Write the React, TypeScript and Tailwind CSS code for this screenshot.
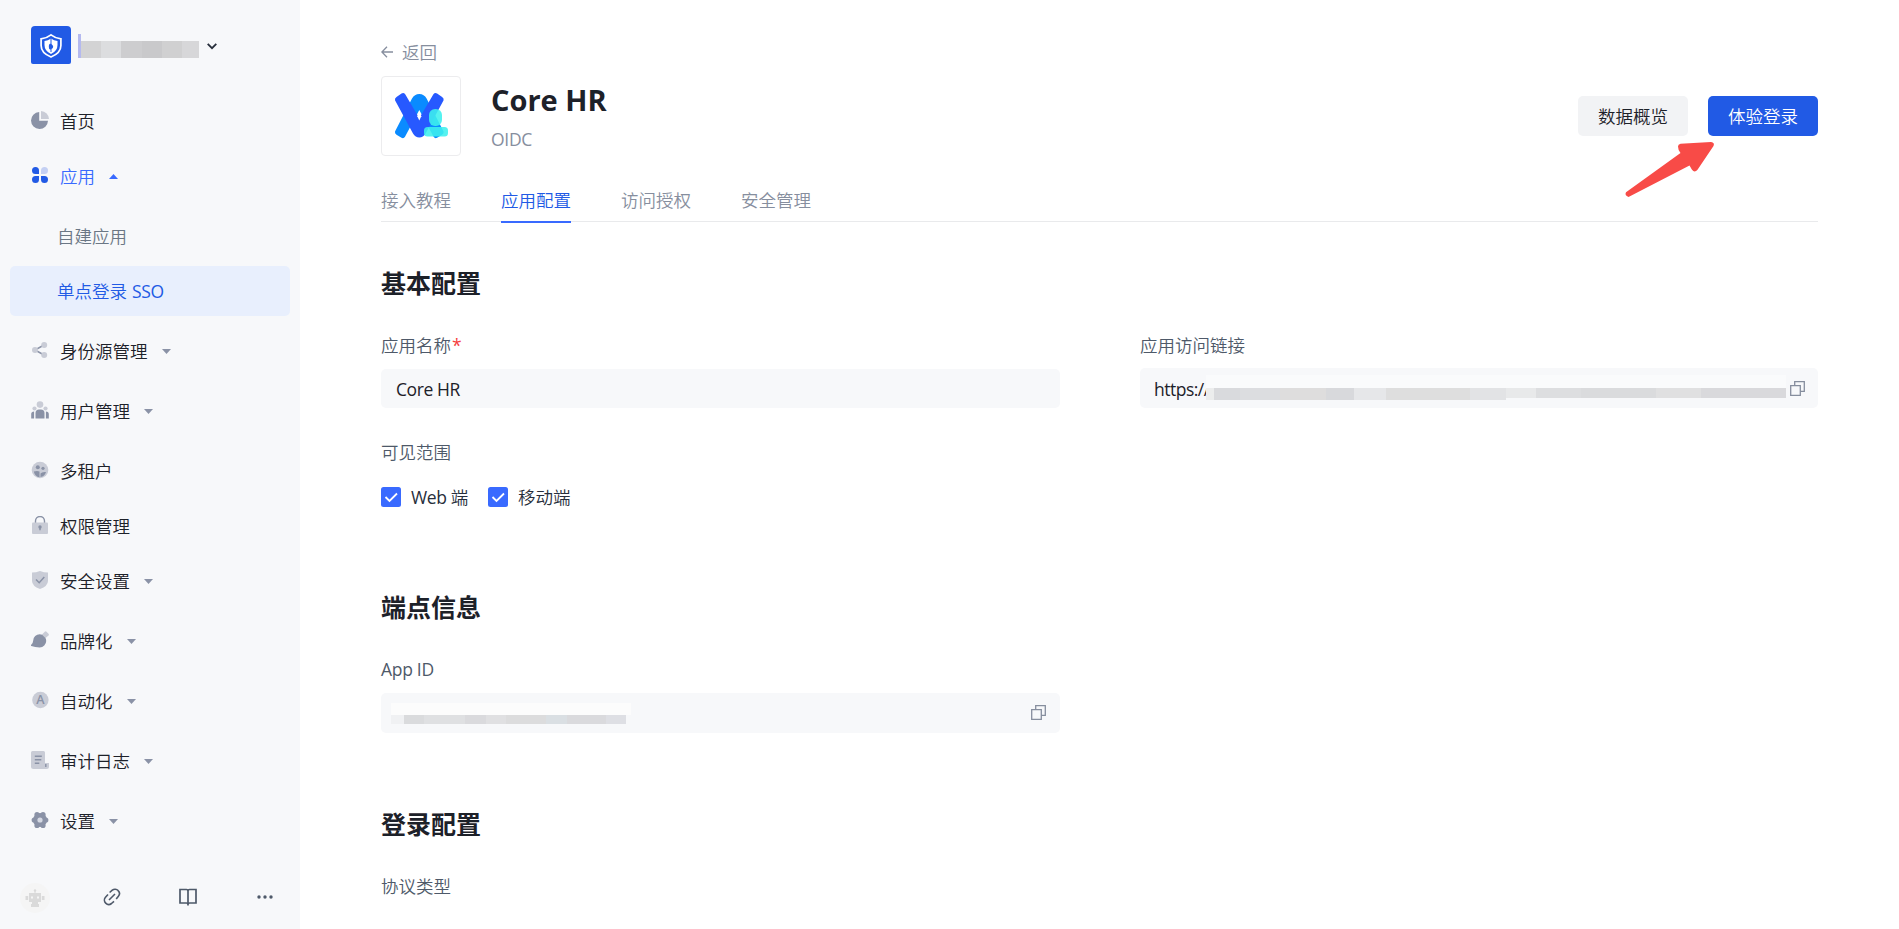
import type { ReactNode } from 'react';

const G = '#8a92a6';
const L = '#c9ccd6';

const Svg = ({ children }: { children: ReactNode }) => (
  <svg width="18" height="18" viewBox="0 0 18 18" fill="none" className="shrink-0">
    {children}
  </svg>
);

const icons = {
  home: (
    <Svg>
      <path d="M8.200 1v8.800H17A8.500 8.500 0 1 1 8.200 1Z" fill={G} />
      <path d="M10 0a8.200 8.200 0 0 1 8 8h-8Z" fill={L} />
    </Svg>
  ),
  apps: (
    <Svg>
      <path d="M4.500 1A3.500 3.500 0 0 1 8 4.500V8H4.500a3.500 3.500 0 0 1 0-7ZM4.500 10H8v3.500A3.500 3.500 0 1 1 4.500 10ZM10 10h3.500A3.500 3.500 0 1 1 10 13.500Z" fill="#215ae5" />
      <path d="M13.500 1a3.500 3.500 0 0 1 0 7H10V4.500A3.500 3.500 0 0 1 13.500 1Z" fill="#c4d0f3" />
    </Svg>
  ),
  share: (
    <Svg>
      <path d="M13 4 4 9l9 5" stroke={G} strokeWidth="1.500" />
      <circle cx="13.200" cy="4" r="3" fill={L} />
      <circle cx="4" cy="9" r="3" fill={L} />
      <circle cx="13.200" cy="14" r="3" fill={L} />
    </Svg>
  ),
  users: (
    <Svg>
      <circle cx="9" cy="3.600" r="3.300" fill={L} />
      <circle cx="3.500" cy="7.500" r="2.100" fill={L} />
      <circle cx="14.500" cy="7.500" r="2.100" fill={L} />
      <path d="M4.500 17.500V12A3.500 3.500 0 0 1 8 8.500h2a3.500 3.500 0 0 1 3.500 3.500v5.500ZM.2 17.500V13q0-2.500 2.900-2.600v7.100ZM17.800 17.500V13q0-2.500-2.900-2.600v7.100Z" fill={G} />
    </Svg>
  ),
  tenants: (
    <Svg>
      <circle cx="9" cy="9" r="8.300" fill={L} />
      <circle cx="6.800" cy="6.300" r="2" fill={G} />
      <circle cx="12" cy="7.300" r="1.600" fill={G} />
      <path d="M2.800 10.500q3.500-1 5.700 0v5.700q-4.500-.5-5.700-5.700ZM9.500 16v-3.500q1.500-2 5.500-1.500-1.300 4.300-5.500 5Z" fill={G} />
    </Svg>
  ),
  lock: (
    <Svg>
      <path d="M4.500 7V5a4.500 4.500 0 0 1 9 0v2" stroke={G} strokeWidth="1.400" />
      <rect x="1" y="6.500" width="16" height="11.500" rx="1" fill={L} />
      <circle cx="9" cy="11" r="1.700" fill={G} />
      <path d="M9 11v3.300" stroke={G} strokeWidth="1.500" />
    </Svg>
  ),
  shield: (
    <Svg>
      <path d="M1 1.500Q5 1.500 9 0q4 1.500 8 1.500V10q0 5-8 8-8-3-8-8Z" fill={L} />
      <path d="m5 8.500 3.200 3.200L13.300 6" stroke={G} strokeWidth="1.500" />
    </Svg>
  ),
  brand: (
    <Svg>
      <path d="m10.500 4 3.300-3.300q.8-.8 1.700 0L17.500 2.700q.8.900 0 1.700L14 7.500Z" fill={L} />
      <path d="M0 14Q2 12.700 2.200 9.500A6.500 6.500 0 0 1 8.700 3.200q1.300 0 2.400.5l3.300 3.300q.8 1.200.8 2.900a6.500 6.500 0 0 1-6.500 6.500Q4 16.300.3 15-.3 14.500 0 14Z" fill={G} />
    </Svg>
  ),
  auto: (
    <Svg>
      <circle cx="9.400" cy="9" r="8.200" fill={L} />
      <text x="9.400" y="13.300" textAnchor="middle" fill={G} className="text-[12.5px] font-semibold">A</text>
    </Svg>
  ),
  audit: (
    <Svg>
      <path d="M1.500 0h11Q14 0 14 1.500V12h4v3.500q0 2.500-2.500 2.500h-13Q0 18 0 15.500v-14Q0 0 1.500 0Z" fill={L} />
      <path d="M3.800 5.300h7M3.800 8.800h6.500M3.800 12.200h4.500M14.800 13v3" stroke={G} strokeWidth="1.400" />
    </Svg>
  ),
  settings: (
    <Svg>
      <g fill={G}>
        <circle cx="9" cy="9" r="7" />
        <circle cx="3.200" cy="9" r="2.600" />
        <circle cx="14.800" cy="9" r="2.600" />
        <circle cx="6" cy="3.500" r="2.600" />
        <circle cx="12" cy="3.500" r="2.600" />
        <circle cx="6" cy="14.500" r="2.600" />
        <circle cx="12" cy="14.500" r="2.600" />
      </g>
      <circle cx="9" cy="9" r="2.600" fill="#d5d9e3" />
    </Svg>
  ),
};

const Caret = ({ up = false }: { up?: boolean }) => (
  <svg width="9" height="5" viewBox="0 0 9 5" className="ml-3.5 shrink-0">
    {up ? <path d="M0 5 4.500 0 9 5Z" fill="#396aff" /> : <path d="M0 0h9L4.500 5Z" fill="#8a92a6" />}
  </svg>
);

type NavProps = { icon: ReactNode; label: string; caret?: boolean };
const NavItem = ({ icon, label, caret }: NavProps) => (
  <div className={caret ? 'mb-2.5 flex h-[50px] items-center pl-[31px]' : 'mb-[5px] flex h-[50px] items-center pl-[31px]'}>
    <span className="-mt-0.5">{icon}</span>
    <span className="ml-[11px]">{label}</span>
    {caret && <Caret />}
  </div>
);

const CopyIcon = () => (
  <svg width="15" height="15" viewBox="0 0 15 15" fill="none" stroke="#868e9e" strokeWidth="1.300" className="shrink-0">
    <path d="M.7 4.700h9.600v9.600H.7ZM4.700 4.700v-4h9.600v9.600h-4" />
  </svg>
);

const Checkbox = () => (
  <svg width="20" height="20" viewBox="0 0 20 20" fill="none">
    <rect width="20" height="20" rx="2.500" fill="#396aff" />
    <path d="m4.500 10 4 4 7.500-7.500" stroke="#fff" strokeWidth="1.800" />
  </svg>
);

const Heading = ({ children }: { children: ReactNode }) => (
  <h2 className="text-[25px] leading-[36px] font-bold text-[#1d2129]">{children}</h2>
);

const Label = ({ children }: { children: ReactNode }) => (
  <div className="leading-[26px] text-[#4e5969]">{children}</div>
);

export default function App() {
  return (
    <div className="flex h-[929px] w-full overflow-hidden bg-white font-['Open_Sans','Noto_Sans_CJK_SC',sans-serif] text-[17.5px] leading-[26px] font-[350] text-[#1d2129]">
      <aside className="flex w-[300px] shrink-0 flex-col bg-[#f7f8fa]">
        <div className="flex h-24 items-start pt-[26px] pl-[31px]">
          <svg width="40" height="38" viewBox="0 0 40 38" fill="none">
            <path d="M4 0h32q4 0 4 4v32q0 2-2 2H2q-2 0-2-2V4q0-4 4-4Z" fill="#215ae5" />
            <path d="M20 8.800q4 3.200 9.900 4v6.700q0 7.500-9.900 11.500-9.900-4-9.900-11.500v-6.700q5.900-.8 9.900-4Z" stroke="#fff" strokeWidth="1.700" />
            <path d="M20 12.500q3 2 6.500 2.600V19q0 6-6.500 9-6.500-3-6.500-9v-3.900q3.500-.6 6.500-2.600Z" fill="#fff" />
            <path d="M20 17.500q2.200 1.700 2.200 3.300T20 23.300t-2.200-2.500 2.200-3.300ZM19.500 12h1v6h-1zM19.500 22h1v4h-1z" fill="#215ae5" />
          </svg>
          <div className="mt-2 ml-[7px] flex h-6 items-end">
            <span className="h-6 w-[3px] bg-[#b4b9ef]" />
            <span className="h-[17px] w-5 bg-[#d3d3d4]" />
            <span className="h-[17px] w-5 bg-[#dcdddf]" />
            <span className="h-[17px] w-[21px] bg-[#cdcdcf]" />
            <span className="h-[17px] w-5 bg-[#c9c9cb]" />
            <span className="h-[17px] w-5 bg-[#d0d0d1]" />
            <span className="h-[17px] w-[17px] bg-[#d7d7d9]" />
          </div>
          <svg width="10" height="7" viewBox="0 0 10 7" fill="none" className="mt-[17px] ml-2">
            <path d="m.7.900 4.300 4.300L9.300.9" stroke="#272e3b" strokeWidth="1.800" />
          </svg>
        </div>

        <nav className="flex-1">
          <NavItem icon={icons.home} label="首页" />
          <div className="mb-2.5 flex h-[50px] items-center pl-[31px] text-[#396aff]">
            <span className="-mt-0.5">{icons.apps}</span>
            <span className="ml-[11px]">应用</span>
            <Caret up />
          </div>
          <div className="mx-2.5 mb-[5px] flex h-[50px] items-center pl-[47px] text-[#6b7785]">自建应用</div>
          <div className="mx-2.5 mb-2.5 flex h-[50px] items-center rounded-[5px] bg-[#e8effd] pl-[47px] text-[#215ae5]">
            <span>单点登录</span>
            <span className="ml-[5px] font-normal tracking-[-0.3px]">SSO</span>
          </div>
          <NavItem icon={icons.share} label="身份源管理" caret />
          <NavItem icon={icons.users} label="用户管理" caret />
          <NavItem icon={icons.tenants} label="多租户" />
          <NavItem icon={icons.lock} label="权限管理" />
          <NavItem icon={icons.shield} label="安全设置" caret />
          <NavItem icon={icons.brand} label="品牌化" caret />
          <NavItem icon={icons.auto} label="自动化" caret />
          <NavItem icon={icons.audit} label="审计日志" caret />
          <NavItem icon={icons.settings} label="设置" caret />
        </nav>

        <div className="mb-4 flex h-[31px] items-center pl-5">
          <svg width="30" height="30" viewBox="0 0 30 30" fill="none">
            <circle cx="15" cy="15" r="15" fill="#f5f5f5" />
            <g fill="#dadada">
              <circle cx="15" cy="7.500" r="1.200" />
              <path d="M14.500 8h1v3h-1zM9 10h12v9H9zM5.500 13h2.700v4H5.500zM21.800 13h2.700v4h-2.700zM12 18h6v3h-6zM11 21h8v3h-8z" />
            </g>
            <path d="M11 13.500h2v2h-2zM17 13.500h2v2h-2z" fill="#f5f5f5" />
          </svg>
          <svg width="18" height="18" viewBox="0 0 18 18" fill="none" stroke="#4e5969" strokeWidth="1.600" className="-mt-0.5 ml-[53px]">
            <path d="M6.600 4.500 9.300 2.200a4.100 4.100 0 0 1 5.800.4 4.100 4.100 0 0 1 .3 5.600L13.200 11M5 6.500 2.500 9.200a4.300 4.300 0 0 0 .2 5.900 4.300 4.300 0 0 0 5.800.4L11 13.300M6 12l6-6" />
          </svg>
          <svg width="18" height="18" viewBox="0 0 18 18" fill="none" stroke="#4e5969" strokeWidth="1.700" className="-mt-0.5 ml-[58px]">
            <path d="M1 1.500h6.500Q9 1.500 9 3q0-1.500 1.500-1.500H17V15h-6.500Q9 15 9 16.500 9 15 7.500 15H1ZM9 3v14.500" />
          </svg>
          <svg width="16" height="4" viewBox="0 0 16 4" fill="#4e5969" className="-mt-0.5 ml-[60px]">
            <circle cx="2" cy="2" r="1.700" />
            <circle cx="8" cy="2" r="1.700" />
            <circle cx="14" cy="2" r="1.700" />
          </svg>
        </div>
      </aside>

      <main className="relative min-w-0 flex-1 pt-[39px] pr-[81px] pl-[81px]">
        <div className="flex h-[26px] items-center text-[#868e9e]">
          <svg width="12" height="12" viewBox="0 0 12 12" fill="none" stroke="#868e9e" strokeWidth="1.300">
            <path d="M12 6H1M6 .8.900 6 6 11.200" />
          </svg>
          <span className="ml-[9px]">返回</span>
        </div>

        <div className="mt-[11px] flex h-20">
          <div className="flex h-20 w-20 items-center justify-center rounded-[4px] border border-[#ececee]">
            <svg width="54" height="48" viewBox="0 0 54 48" fill="none">
              <path d="M1 39.500 18 6.500Q20.500 2 25.300 2t7.300 4.500l17 33q.5 2-1.500 3.300l-5 3q-2.200 1-3.500-1L25.300 18 11 44.800q-1.300 2-3.500 1l-5-3Q.5 41.500 1 39.500Z" fill="#0a8bff" />
              <path d="M1 8.200q-.5-2 1.500-3.300l5-3.500q2.200-1.200 3.700.8l14.100 24 14.100-24q1.500-2 3.700-.8l5 3.500q2 1.300 1.500 3.300l-18 33.300Q29.200 45.500 25.300 45.500T19 41.500Z" fill="#2759ff" />
              <path d="m25.300 20 2 4.200-2 4.300-2-4.300Z" fill="#fff" />
              <rect x="35" y="17" width="13" height="17" rx="6" fill="#3df0ee" fillOpacity=".88" />
              <rect x="30" y="35" width="24" height="9.500" rx="3.500" fill="#3df0ee" fillOpacity=".88" />
            </svg>
          </div>
          <div className="ml-[30px] flex-1">
            <h1 className="mt-0.5 text-[29px] leading-[44px] font-bold">Core HR</h1>
            <div className="mt-1 font-normal tracking-[-0.3px] text-[#868e9e]">OIDC</div>
          </div>
          <div className="mt-5 flex gap-5">
            <button className="h-10 w-[110px] rounded-[5px] bg-[#f2f3f5]">数据概览</button>
            <button className="h-10 w-[110px] rounded-[5px] bg-[#215ae5] text-white">体验登录</button>
          </div>
        </div>

        <div className="mt-[31px] flex h-[35px] gap-[50px] border-b border-[#e9eaec] text-[#868e9e]">
          <span>接入教程</span>
          <span className="h-9 border-b-2 border-[#396aff] text-[#215ae5]">应用配置</span>
          <span>访问授权</span>
          <span>安全管理</span>
        </div>

        <section className="mt-[43px]">
          <Heading>基本配置</Heading>
          <div className="mt-[31px] grid grid-cols-[679px_678px] gap-20">
            <div>
              <Label>应用名称<span className="ml-px font-normal text-[#f53f3f]">*</span></Label>
              <div className="mt-[11px] flex h-[39px] items-center rounded-[5px] bg-[#f7f8fa] pl-[15px] font-normal tracking-[-0.4px]">Core HR</div>
              <div className="mt-[31px]"><Label>可见范围</Label></div>
              <div className="mt-[19px] flex h-[26px] items-center text-[#272e3b]">
                <Checkbox />
                <span className="-mt-px ml-2.5 w-[77px] whitespace-nowrap"><span className="font-normal tracking-[-0.4px]">Web </span>端</span>
                <Checkbox />
                <span className="-mt-px ml-2.5">移动端</span>
              </div>
            </div>
            <div>
              <Label>应用访问链接</Label>
              <div className="mt-2.5 flex h-10 items-center rounded-[5px] bg-[#f7f8fa] pl-3.5">
                <span className="mt-0.5 w-[52px] font-normal tracking-[-0.5px] whitespace-nowrap">https://</span>
                <div className="relative -mt-0.5 flex-1">
                  <div className="h-[13px] bg-[#fafbfc]" />
                  <div className="flex h-3">
                    <span className="w-2 bg-[#eceded]" />
                    <span className="w-[26px] bg-[#d9dadd]" />
                    <span className="w-[40px] bg-[#dcdde0]" />
                    <span className="w-[46px] bg-[#dedddd]" />
                    <span className="w-[28px] bg-[#d8d9dc]" />
                    <span className="w-[32px] bg-[#e6e7e9]" />
                    <span className="w-[84px] bg-[#dedede]" />
                    <span className="w-[36px] bg-[#e2e3e5]" />
                    <span className="h-2.5 w-[30px] bg-[#e8e9ea]" />
                    <span className="h-2.5 w-[45px] bg-[#dddee0]" />
                    <span className="h-2.5 w-[75px] bg-[#dadbdd]" />
                    <span className="h-2.5 w-[45px] bg-[#e0e0e1]" />
                    <span className="h-2.5 flex-1 bg-[#d9d9dc]" />
                  </div>
                </div>
                <span className="mr-[13px] ml-1"><CopyIcon /></span>
              </div>
            </div>
          </div>
        </section>

        <section className="mt-[79px]">
          <Heading>端点信息</Heading>
          <div className="mt-[31px] font-normal tracking-[-0.3px]"><Label>App ID</Label></div>
          <div className="mt-[11px] flex h-10 w-[679px] items-center rounded-[5px] bg-[#f7f8fa] pr-3.5 pl-2.5">
            <div className="w-[240px]">
              <div className="h-3 bg-[#fcfcfc]" />
              <div className="flex h-[9px]">
                <span className="w-[13px] bg-[#f0f1f3]" />
                <span className="w-5 bg-[#dadbdd]" />
                <span className="w-[41px] bg-[#dfe0e2]" />
                <span className="w-[21px] bg-[#dadadd]" />
                <span className="w-[20px] bg-[#e0e0e2]" />
                <span className="w-[40px] bg-[#dcdcdd]" />
                <span className="w-[21px] bg-[#dadfe3]" />
                <span className="w-[39px] bg-[#dadadd]" />
                <span className="w-5 bg-[#dedfe4]" />
              </div>
            </div>
            <span className="-mt-px ml-auto"><CopyIcon /></span>
          </div>
        </section>

        <section className="mt-[73px]">
          <Heading>登录配置</Heading>
          <div className="mt-[31px]"><Label>协议类型</Label></div>
        </section>

        <svg width="92" height="58" viewBox="0 0 92 58" className="absolute top-[140px] left-[1324px]">
          <path d="M2 52.300 56.500 13q-2.500-3-2.500-6.500 0-2.300 2.500-2.700L87 2q4 .5 2.500 4L73.500 29.800q-3 3.500-5.500 0L65.500 25.500 4.500 57Q.3 55.500 2 52.300Z" fill="#f84b47" />
        </svg>
      </main>
    </div>
  );
}
